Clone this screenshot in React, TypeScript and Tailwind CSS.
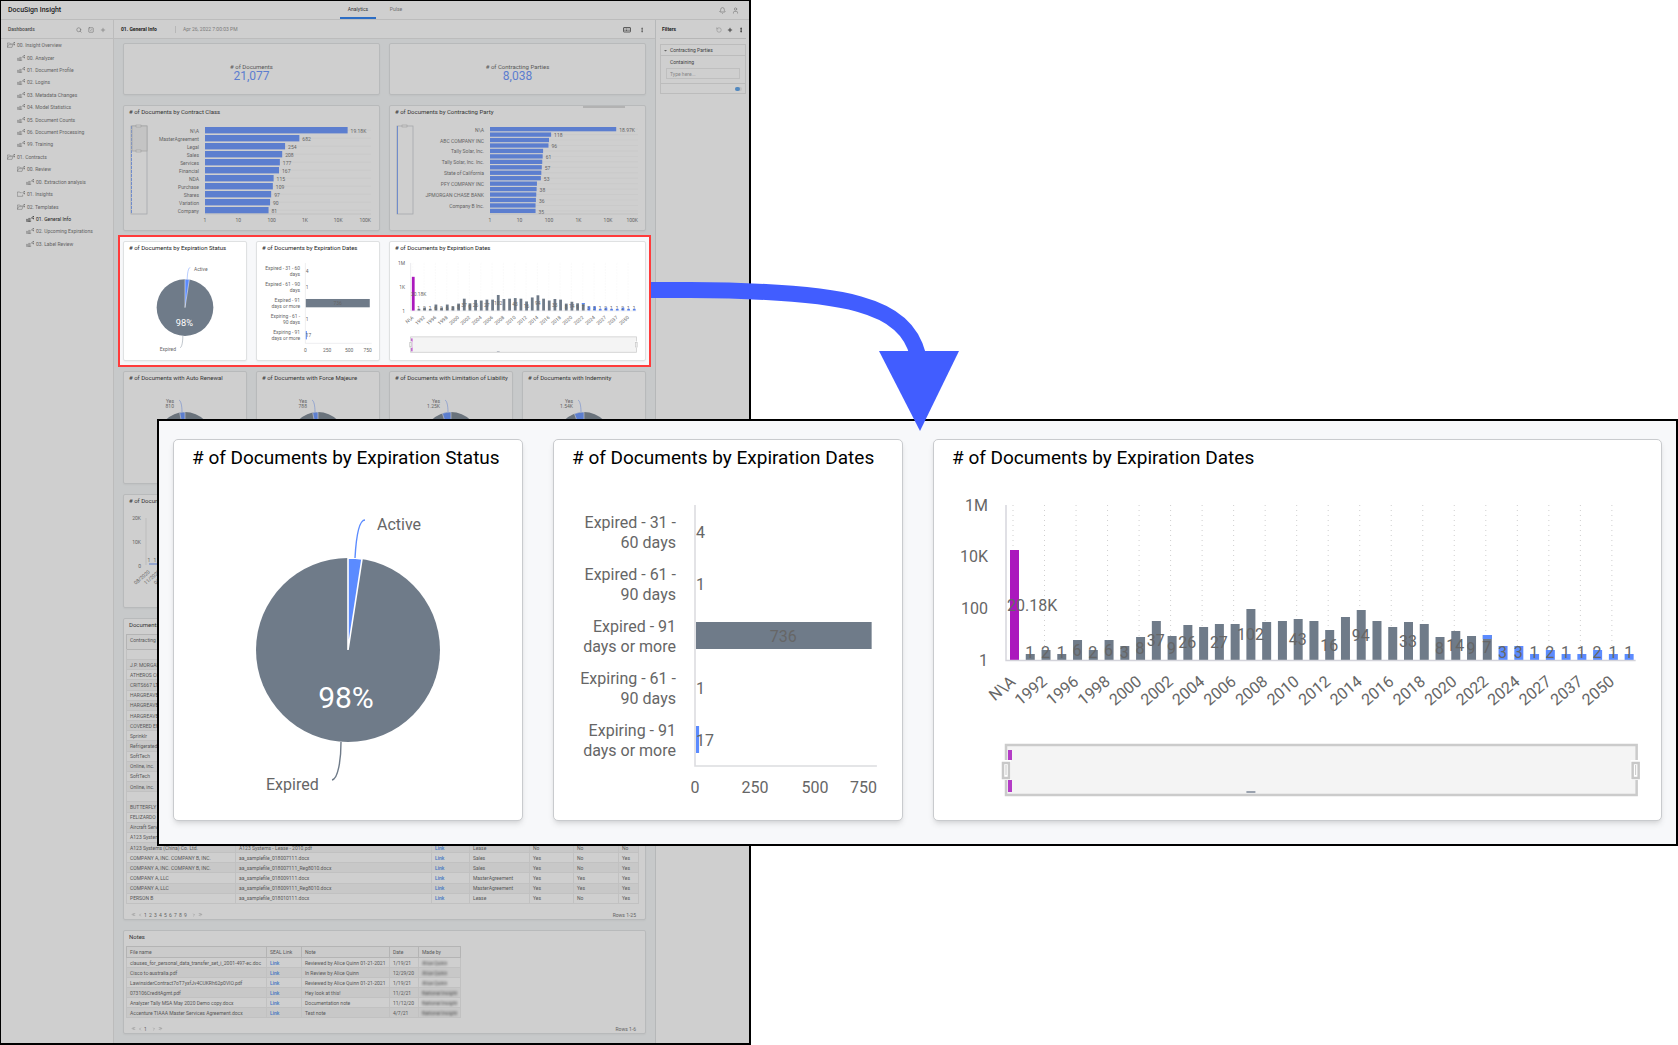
import type { ReactNode } from "react";
import { clsx } from "clsx";
import {
  Bell,
  ChevronLeft,
  ChevronRight,
  ChevronsLeft,
  ChevronsRight,
  EllipsisVertical,
  Plus,
  RotateCcw,
  Search,
  SquareCheck,
  User,
} from "lucide-react";

const SLATE = "#6f7b89";
const BLUE = "#5b8bff";
const PURPLE = "#ab18bd";
const LABEL = "#666666";

type TreeItem = {
  label: string;
  level: 0 | 1 | 2;
  kind: "open" | "closed" | "board";
  active?: boolean;
};

const TREE: TreeItem[] = [
  { label: "00. Insight Overview", level: 0, kind: "open" },
  { label: "00. Analyzer", level: 1, kind: "board" },
  { label: "01. Document Profile", level: 1, kind: "board" },
  { label: "02. Logins", level: 1, kind: "board" },
  { label: "03. Metadata Changes", level: 1, kind: "board" },
  { label: "04. Model Statistics", level: 1, kind: "board" },
  { label: "05. Document Counts", level: 1, kind: "board" },
  { label: "06. Document Processing", level: 1, kind: "board" },
  { label: "99. Training", level: 1, kind: "board" },
  { label: "01. Contracts", level: 0, kind: "open" },
  { label: "00. Review", level: 1, kind: "open" },
  { label: "00. Extraction analysis", level: 2, kind: "board" },
  { label: "01. Insights", level: 1, kind: "closed" },
  { label: "02. Templates", level: 1, kind: "open" },
  { label: "01. General Info", level: 2, kind: "board", active: true },
  { label: "02. Upcoming Expirations", level: 2, kind: "board" },
  { label: "03. Label Review", level: 2, kind: "board" },
];

function TreeIcon({ kind }: { kind: TreeItem["kind"] }) {
  return (
    <svg viewBox="0 0 24 18" className="h-[6px] w-[8px] shrink-0" fill="none" stroke="currentColor" strokeWidth="1.4">
      {kind === "board" ? (
        <path d="M1 16V10h4v6zM8 16V7h3v9zM5 17h9v-4M12 10l5-4" />
      ) : (
        <path d={kind === "open" ? "M1 16V3h6l2 2h5M1 16l4-8h13l-3 8z" : "M14 5H9L7 3H1v13h16v-5"} />
      )}
      <circle cx="22" cy="2" r="1.2" fill="currentColor" />
      <circle cx="22" cy="8" r="1.2" fill="currentColor" />
      <path d="M22 2l-5 3 5 3" />
    </svg>
  );
}

function Sidebar() {
  return (
    <nav className="w-[113px] shrink-0 border-r border-[#e4e4e4] bg-white">
      <div className="flex h-[19px] items-center border-b border-[#e4e4e4] px-[7px] pt-px text-[#444]">
        <h2 className="flex-1 text-[5px] font-medium">Dashboards</h2>
        <div className="flex gap-[6px] text-[#666]">
          <button type="button" aria-label="Search"><Search size={6} /></button>
          <button type="button" aria-label="Select"><SquareCheck size={6} /></button>
          <button type="button" aria-label="Add"><Plus size={6} /></button>
        </div>
      </div>
      <ul className="grid h-[211px] auto-rows-fr text-[5px] text-[#666]">
        {TREE.map((item) => (
          <li key={item.level + item.label} className="flex">
            <a
              href="#"
              className={clsx(
                "flex flex-1 items-center gap-[2px] leading-[6px]",
                item.level === 0 && "pl-[6px]",
                item.level === 1 && "pl-[16px]",
                item.level === 2 && "pl-[25px]",
                item.active && "text-black",
              )}
            >
              <TreeIcon kind={item.kind} />
              {item.label}
            </a>
          </li>
        ))}
      </ul>
    </nav>
  );
}

function Filters() {
  return (
    <aside className="w-[94px] shrink-0 border-l border-[#dcdfe0] bg-white pl-[4px] pr-[3px]">
      <div className="flex h-[19px] items-center border-b border-[#dcdcdc] pt-px pl-[2px]">
        <h2 className="flex-1 text-[5px] font-bold">Filters</h2>
        <div className="flex gap-[5px] pr-[2px]">
          <button type="button" aria-label="Reset filters" className="text-[#999]"><RotateCcw size={6} /></button>
          <button type="button" aria-label="Add filter"><Plus size={6} strokeWidth={3} /></button>
          <button type="button" aria-label="Filter menu"><EllipsisVertical size={6} strokeWidth={3} /></button>
        </div>
      </div>
      <div className="mt-[5px] border border-[#e4e4e4] text-[5px] leading-[7px]">
        <button type="button" className="flex h-[11px] w-full items-center gap-[3px] border-b border-[#e4e4e4] pl-[3px] text-[#333]">
          <svg viewBox="0 0 6 6" className="size-[3px]"><path d="M0 2h6L3 5z" fill="#666" /></svg>
          Contracting Parties
        </button>
        <div className="px-[5px] pb-[4px]">
          <label htmlFor="party" className="block h-[12px] pt-[3px] pl-[4px] text-[#333]">Containing</label>
          <input
            id="party"
            placeholder="Type here..."
            className="block h-[11px] w-full border border-[#e8e8e8] pl-[3px] text-[5px] placeholder:text-[#999]"
          />
        </div>
        <div className="flex h-[10px] items-center justify-end border-t border-[#e4e4e4] pr-[3px]">
          <label className="flex h-[4px] w-[7px] rounded-full bg-[#e8e8e8]">
            <input type="checkbox" defaultChecked aria-label="Enable filter" className="size-0 appearance-none" />
            <span className="h-[4px] w-[5px] rounded-xs bg-[#4d9bea]" />
          </label>
        </div>
      </div>
    </aside>
  );
}

function Card({ title, className, children }: { title?: string; className?: string; children?: ReactNode }) {
  return (
    <section className={clsx("flex flex-col rounded-[2px] border border-[#dfe1e2] bg-white shadow-xs", className)}>
      {title ? (
        <h3 className="h-[12px] shrink-0 overflow-hidden pl-[5px] text-[6px] leading-[11px] whitespace-nowrap text-[#222]">{title}</h3>
      ) : null}
      {children}
    </section>
  );
}

function Kpi({ label, value }: { label: string; value: string }) {
  return (
    <Card className="col-span-2 h-[52px] items-center justify-center pt-[8px]">
      <p className="text-[6px] leading-[7px] text-[#555]">{label}</p>
      <p className="text-[12px] leading-[13px] text-[#5b8bff]">{value}</p>
    </Card>
  );
}

type LogBarsProps = {
  rows: { name?: string; value: number; text?: string }[];
  axisX: number;
  decade: number;
  pitch: number;
  barHeight: number;
  right: number;
  windowEnd?: number;
};

// horizontal bars on a logarithmic scale, with the vertical range slider on the left
function LogBars({ rows, axisX, decade, pitch, barHeight, right, windowEnd }: LogBarsProps) {
  return (
    <svg viewBox="0 0 255 112" className="h-[112px] w-full" fontSize="5" fill={LABEL}>
      <rect x="7" y="8" width="16" height="88" fill="none" stroke="#c4c8cc" strokeWidth="0.8" />
      <path d="M7.5 8v88" stroke={BLUE} strokeWidth="0.8" strokeDasharray={windowEnd ? "3 1" : undefined} />
      {windowEnd ? <rect x="8" y="8" width="15" height={windowEnd} fill="#f0f0f0" stroke="#c4c4c4" strokeWidth="0.8" /> : null}
      <rect x="12" y="7" width="5" height="2" fill="#fff" stroke="#aaa" strokeWidth="0.5" />
      {windowEnd ? <rect x="12" y={7 + windowEnd} width="5" height="2" fill="#fff" stroke="#aaa" strokeWidth="0.5" /> : null}
      {rows.map((row, i) => {
        const y = 9 + barHeight / 2 + i * pitch;
        const width = Math.log10(row.value) * decade;
        return (
          <g key={i}>
            <path d={`M${axisX} ${y}H${right}`} stroke="#f0f0f0" strokeWidth="0.5" />
            <rect x={axisX} y={y - barHeight / 2} width={width} height={barHeight} fill={BLUE} />
            {row.name ? (
              <text x={axisX - 6} y={y + 0.5} textAnchor="end" dominantBaseline="central">{row.name}</text>
            ) : null}
            {row.text ? <text x={axisX + width + 3} y={y + 0.6} dominantBaseline="central">{row.text}</text> : null}
          </g>
        );
      })}
      <path d={`M${axisX} 96H${right}`} stroke="#ddd" strokeWidth="0.6" />
      {["1", "10", "100", "1K", "10K", "100K"].map((tick, i) => (
        <text
          key={tick}
          x={i === 5 ? right : axisX + i * decade}
          y="102"
          textAnchor={i === 5 ? "end" : "middle"}
          dominantBaseline="central"
        >
          {tick}
        </text>
      ))}
    </svg>
  );
}

const CLASS_ROWS = [
  { name: "N\\A", value: 19180, text: "19.18K" },
  { name: "MasterAgreement", value: 682, text: "682" },
  { name: "Legal", value: 254, text: "254" },
  { name: "Sales", value: 208, text: "208" },
  { name: "Services", value: 177, text: "177" },
  { name: "Financial", value: 167, text: "167" },
  { name: "NDA", value: 115, text: "115" },
  { name: "Purchase", value: 109, text: "109" },
  { name: "Shares", value: 97, text: "97" },
  { name: "Variation", value: 90, text: "90" },
  { name: "Company", value: 81, text: "81" },
];

const PARTY_ROWS = [
  { name: "N\\A", value: 18970, text: "18.97K" },
  { value: 118, text: "118" },
  { name: "ABC COMPANY INC", value: 100 },
  { value: 96, text: "96" },
  { name: "Tally Solar, Inc.", value: 63 },
  { value: 61, text: "61" },
  { name: "Tally Solar, Inc. Inc.", value: 59 },
  { value: 57, text: "57" },
  { name: "State of California", value: 55 },
  { value: 53, text: "53" },
  { name: "PFY COMPANY INC", value: 39 },
  { value: 38, text: "38" },
  { name: "JPMORGAN CHASE BANK", value: 37 },
  { value: 36, text: "36" },
  { name: "Company B Inc.", value: 35 },
  { value: 35, text: "35" },
];

function StatusPie({ className }: { className: string }) {
  return (
    <svg viewBox="0 0 348 344" className={clsx("w-full", className)} fontSize="16" fill={LABEL}>
      <circle cx="174" cy="174" r="92" fill={SLATE} />
      <path d="M174 174V82A92 92 0 0 1 188 83Z" fill={BLUE} stroke="#fff" strokeWidth="1.6" />
      <path d="M181 82C182 64 184 44 191 44" fill="none" stroke={BLUE} strokeWidth="1.4" />
      <path d="M167 266C167 284 164 303 158 304" fill="none" stroke={SLATE} strokeWidth="1.4" />
      <text x="203" y="48" dominantBaseline="central">Active</text>
      <text x="92" y="308" dominantBaseline="central">Expired</text>
      <text x="172" y="221" fontSize="30" fill="#fff" textAnchor="middle" dominantBaseline="central">98%</text>
    </svg>
  );
}

type DayBarsProps = {
  className: string;
  width: number;
  labelX: number;
  axisX: number;
  unit: number;
  names: [string, string][];
};

function DayBars({ className, width, labelX, axisX, unit, names }: DayBarsProps) {
  const values = [4, 1, 736, 1, 17];
  const end = axisX + unit * 758;
  return (
    <svg viewBox={`0 0 ${width} 344`} className={clsx("w-full", className)} fontSize="16" fill={LABEL}>
      {values.map((value, i) => {
        const y = 55 + i * 52;
        return (
          <g key={i}>
            {value >= 10 ? (
              <rect x={axisX + 1} y={y - 13} width={Math.max(2, value * unit - 1)} height="27" fill={value > 100 ? SLATE : BLUE} />
            ) : null}
            <text x={labelX} y={y - 9} textAnchor="end" dominantBaseline="central">{names[i][0]}</text>
            <text x={labelX} y={y + 11} textAnchor="end" dominantBaseline="central">{names[i][1]}</text>
            <text
              x={value > 100 ? axisX + (value * unit) / 2 : axisX + 1}
              y={y + 1}
              textAnchor={value > 100 ? "middle" : "start"}
              dominantBaseline="central"
            >
              {value}
            </text>
          </g>
        );
      })}
      <path d={`M${axisX} 29V290H${end}`} fill="none" stroke="#dcdde0" strokeWidth="1.6" />
      {[0, 250, 500, 750].map((tick) => (
        <text
          key={tick}
          x={tick === 750 ? end : axisX + tick * unit}
          y="311"
          textAnchor={tick === 750 ? "end" : "middle"}
          dominantBaseline="central"
        >
          {tick}
        </text>
      ))}
    </svg>
  );
}

const YEAR_HEIGHTS = [
  110, 6, 10, 6, 20, 10, 20, 14, 23, 39, 24, 35, 33, 36, 36, 51, 38, 39, 41, 39,
  30, 43, 50, 39, 33, 38, 36, 23, 29, 24, 25, 14, 14, 6, 10, 6, 6, 10, 6, 6,
];

const YEAR_VALUES: Record<number, string> = {
  1: "1", 2: "2", 3: "1", 4: "6", 5: "2", 6: "6", 7: "3", 8: "8", 9: "37", 10: "9",
  11: "26", 13: "27", 15: "102", 18: "43", 20: "16", 22: "94", 25: "33", 27: "8",
  28: "14", 29: "9", 30: "7", 31: "3", 32: "3", 33: "1", 34: "2", 35: "1", 36: "1",
  37: "2", 38: "1", 39: "1",
};

const YEARS = [
  "N\\A", "1992", "1996", "1998", "2000", "2002", "2004", "2006", "2008", "2010",
  "2012", "2014", "2016", "2018", "2020", "2022", "2024", "2027", "2037", "2050",
];

type YearBarsProps = {
  className: string;
  width: number;
  axisX: number;
  pitch: number;
  ticks: string[];
};

function YearBars({ className, width, axisX, pitch, ticks }: YearBarsProps) {
  const base = 184;
  const center = (i: number) => axisX + 8 + i * pitch;
  const end = center(39) + 7;
  return (
    <svg viewBox={`0 0 ${width} 344`} className={clsx("w-full", className)} fontSize="16" fill={LABEL}>
      {ticks.map((tick, i) => (
        <text key={tick} x={axisX - 18} y={29 + (i * 155) / (ticks.length - 1)} textAnchor="end" dominantBaseline="central">
          {tick}
        </text>
      ))}
      {YEARS.map((year, i) => (
        <path key={year} d={`M${center(i * 2) - 1} 29V${base}`} stroke="#cfcfcf" strokeDasharray="1 4" />
      ))}
      {YEAR_HEIGHTS.map((height, i) => (
        <rect
          key={i}
          x={center(i) - 4}
          y={base - height}
          width="9"
          height={height}
          fill={i === 0 ? PURPLE : i > 30 ? BLUE : SLATE}
        />
      ))}
      <rect x={center(30) - 4} y={base - 25} width="9" height="4" fill={BLUE} />
      <path d={`M${axisX} 29V${base + 0.5}H${end}`} fill="none" stroke="#d3d3da" strokeWidth="1.4" />
      <text x={axisX + 1} y="129" dominantBaseline="central">20.18K</text>
      {Object.entries(YEAR_VALUES).map(([key, value]) => {
        const i = Number(key);
        return (
          <text key={key} x={center(i)} y={base - Math.max(8, YEAR_HEIGHTS[i] / 2)} textAnchor="middle" dominantBaseline="central">
            {value}
          </text>
        );
      })}
      {YEARS.map((year, i) => (
        <text
          key={year}
          textAnchor="end"
          dominantBaseline="central"
          transform={`translate(${center(i * 2) - 1} 203) rotate(-40)`}
        >
          {year}
        </text>
      ))}
      <rect x={axisX} y="269" width={end - axisX + 1} height="50" fill="#f4f4f4" stroke="#cbcbcb" strokeWidth="2.5" />
      <rect x={axisX + 2} y="274" width="4" height="42" fill="#b43cc6" />
      <rect x={axisX + 2} y="284" width="4" height="20" fill="#f4f4f4" />
      <rect x={center(15) - 4} y="315" width="9" height="2" fill="#9aa2ae" />
      {[axisX, end].map((x) => (
        <g key={x}>
          <rect x={x - 5} y="284" width="10" height="20" fill="#fff" />
          <rect x={x - 3} y="287" width="6" height="15" fill="#fff" stroke="#c8c8c8" strokeWidth="2.5" />
          <path d={`M${x} 289v10`} stroke="#c8c8c8" />
        </g>
      ))}
    </svg>
  );
}

function YesPie({ value, sweep }: { value: string; sweep: number }) {
  const angle = (sweep * Math.PI) / 180;
  const x = 61 - 28 * Math.sin(angle);
  const y = 56 - 28 * Math.cos(angle);
  return (
    <svg viewBox="0 0 122 99" className="h-[99px] w-full" fontSize="5" fill={LABEL}>
      <circle cx="61" cy="56" r="28" fill={SLATE} />
      <path d={`M61 56L${x} ${y}A28 28 0 0 1 61 28Z`} fill={BLUE} stroke="#fff" strokeWidth="0.6" />
      <path d="M55 16C57 17 58 22 58 28" fill="none" stroke={BLUE} strokeWidth="0.5" />
      <text x="50" y="17" textAnchor="end" dominantBaseline="central">Yes</text>
      <text x="50" y="22" textAnchor="end" dominantBaseline="central">{value}</text>
    </svg>
  );
}

const YES_CHARTS = [
  { title: "# of Documents with Auto Renewal", value: "810", sweep: 11 },
  { title: "# of Documents with Force Majeure", value: "788", sweep: 11 },
  { title: "# of Documents with Limitation of Liability", value: "1.25K", sweep: 18 },
  { title: "# of Documents with Indemnity", value: "1.54K", sweep: 20 },
];

function MonthLine() {
  return (
    <svg viewBox="0 0 521 100" preserveAspectRatio="xMinYMin meet" className="h-[100px] w-full" fontSize="5" fill={LABEL}>
      {["20K", "10K", "0"].map((tick, i) => (
        <text key={tick} x="17" y={11 + i * 24} textAnchor="end" dominantBaseline="central">{tick}</text>
      ))}
      <path d="M22 11V58" stroke="#ccc" strokeWidth="0.5" />
      <path d="M25 57H500" stroke={BLUE} />
      {["08/2020", "11/2020", "01/2021"].map((tick, i) => (
        <g key={tick}>
          <text x={25 + i * 6} y="53" textAnchor="middle" dominantBaseline="central">1</text>
          <text transform={`translate(${25 + i * 10} 64) rotate(-40)`} textAnchor="end" dominantBaseline="central">{tick}</text>
        </g>
      ))}
    </svg>
  );
}

const DOCUMENTS: string[][] = [
  [""],
  ["J.P. MORGAN"],
  ["ATHEROS CO."],
  ["CRITS667 LTD"],
  ["HARGREAVES"],
  ["HARGREAVES"],
  ["HARGREAVES"],
  ["COVERED EN"],
  ["Sprinklr"],
  ["Refrigerated"],
  ["SoftTech"],
  ["Online, inc."],
  ["SoftTech"],
  ["Online, inc."],
  [""],
  ["BUTTERFLY"],
  ["FELIZARDO"],
  ["Aircraft Serv"],
  ["A123 System"],
  ["A123 Systems (China) Co. Ltd.", "A123 Systems - Lease - 2010.pdf", "Link", "Lease", "No", "No", "No"],
  ["COMPANY A, INC. COMPANY B, INC.", "aa_samplefile_018007111.docx", "Link", "Sales", "Yes", "No", "Yes"],
  ["COMPANY A, INC. COMPANY B, INC.", "aa_samplefile_018007111_Reg8010.docx", "Link", "Sales", "Yes", "No", "Yes"],
  ["COMPANY A, LLC", "aa_samplefile_018009111.docx", "Link", "MasterAgreement", "Yes", "Yes", "Yes"],
  ["COMPANY A, LLC", "aa_samplefile_018009111_Reg8010.docx", "Link", "MasterAgreement", "Yes", "Yes", "Yes"],
  ["PERSON B", "aa_samplefile_018010111.docx", "Link", "Lease", "Yes", "No", "Yes"],
];

const NOTES: string[][] = [
  ["clauses_for_personal_data_transfer_set_i_2001-497-ec.doc", "Link", "Reviewed by Alice Quinn 01-21-2021", "1/19/21", "Alice Quinn"],
  ["Cisco tc-australia.pdf", "Link", "In Review by Alice Quinn", "12/29/20", "Alice Quinn"],
  ["LawinsiderContract7oT7yxfJv4CUKRh62p0VIO.pdf", "Link", "Reviewed by Alice Quinn 01-21-2021", "1/19/21", "Alice Quinn"],
  ["073106CreditAgmt.pdf", "Link", "Hey look at this!", "11/2/21", "National Insight"],
  ["Analyzer Tally MSA May 2020 Demo copy.docx", "Link", "Documentation note", "11/12/20", "National Insight"],
  ["Accenture TIAAA Master Services Agreement.docx", "Link", "Test note", "4/7/21", "National Insight"],
];

function Cell({ text, hidden }: { text: string; hidden?: boolean }) {
  return (
    <td className="overflow-hidden border-x border-[#ebebeb] px-[3px] py-0 whitespace-nowrap">
      {text === "Link" ? (
        <a href="#" className="block leading-[6px] font-medium text-[#2f80ed]">Link</a>
      ) : (
        <span className={clsx("block h-[6px] leading-[6px]", hidden && "w-fit bg-black/5 blur-[1px]")}>{text}</span>
      )}
    </td>
  );
}

function Pager({ pages, rows }: { pages: number; rows: string }) {
  return (
    <div className="flex flex-1 items-center pt-[6px] pr-[9px] pl-[7px] text-[5px] leading-[6px] text-[#666]">
      <div className="flex flex-1 items-center gap-[2px]">
        <button type="button" aria-label="First page"><ChevronsLeft size={5} /></button>
        <button type="button" aria-label="Previous page"><ChevronLeft size={4} /></button>
        {Array.from({ length: pages }, (_, i) => (
          <button key={i} type="button" className="w-[3px]">{i + 1}</button>
        ))}
        <button type="button" aria-label="Next page" className="ml-[3px]"><ChevronRight size={4} /></button>
        <button type="button" aria-label="Last page"><ChevronsRight size={5} /></button>
      </div>
      <span>{rows}</span>
    </div>
  );
}

function DocumentsTable() {
  return (
    <Card title="Documents" className="col-span-4 h-[302px]">
      <div className="mt-[3px] mr-[7px] ml-[2px]">
        <table className="h-[270px] w-full table-fixed border-collapse border border-[#d8d8d8] text-left text-[5px] leading-[6px] text-[#555]">
          <colgroup>
            <col className="w-[109px]" />
            <col className="w-[196px]" />
            <col className="w-[38px]" />
            <col className="w-[60px]" />
            <col className="w-[44px]" />
            <col className="w-[45px]" />
            <col className="w-[20px]" />
          </colgroup>
          <thead>
            <tr className="h-[15px] border border-[#d8d8d8] bg-[#fafafa] align-top">
              <th scope="col" className="px-[3px] pt-[2px] font-normal whitespace-nowrap">Contracting Party</th>
              <th scope="col" colSpan={6} />
            </tr>
          </thead>
          <tbody>
            {DOCUMENTS.map((row, i) => (
              <tr key={i} className="h-[10px] border-b border-[#ebebeb] even:bg-[#f5f5f5]">
                {Array.from({ length: 7 }, (_, c) => <Cell key={c} text={row[c] ?? ""} />)}
              </tr>
            ))}
          </tbody>
        </table>
      </div>
      <Pager pages={9} rows="Rows 1-25" />
    </Card>
  );
}

function NotesTable() {
  return (
    <Card title="Notes" className="col-span-4 h-[104px]">
      <table className="mt-[3px] ml-[2px] h-[72px] w-[334px] table-fixed border-collapse border border-[#d8d8d8] text-left text-[5px] leading-[6px] text-[#555]">
        <colgroup>
          <col className="w-[140px]" />
          <col className="w-[35px]" />
          <col className="w-[88px]" />
          <col className="w-[29px]" />
          <col className="w-[42px]" />
        </colgroup>
        <thead>
          <tr className="h-[11px] border-b border-[#d8d8d8] bg-[#fafafa]">
            {["File name", "SEAL Link", "Note", "Date", "Made by"].map((name) => (
              <th key={name} scope="col" className="border border-[#d8d8d8] px-[3px] py-0 font-normal whitespace-nowrap">{name}</th>
            ))}
          </tr>
        </thead>
        <tbody>
          {NOTES.map((row) => (
            <tr key={row[0]} className="h-[10px] border-b border-[#ebebeb] even:bg-[#f5f5f5]">
              {row.map((text, c) => <Cell key={c} text={text} hidden={c === 4} />)}
            </tr>
          ))}
        </tbody>
      </table>
      <Pager pages={1} rows="Rows 1-6" />
    </Card>
  );
}

function Dashboard() {
  return (
    <div className="relative flex flex-col border border-r-2 border-b-2 border-black bg-white">
      <header className="flex h-[19px] items-center border-b border-[#e4e4e4] pl-[7px]">
        <h1 className="w-[332px] text-[7px] leading-[10px] font-medium">DocuSign Insight</h1>
        <div className="flex h-full flex-1 text-[5px] text-[#777]">
          <button type="button" className="h-full w-[36px] border-b-2 border-[#1673f0] pt-px text-[#222]">Analytics</button>
          <button type="button" className="w-[40px]">Pulse</button>
        </div>
        <div className="flex gap-[6px] pr-[10px] text-[#777]">
          <button type="button" aria-label="Notifications"><Bell size={7} /></button>
          <button type="button" aria-label="Account"><User size={7} /></button>
        </div>
      </header>

      <div className="flex flex-1">
        <Sidebar />
        <main className="min-w-0 flex-1 bg-[#f4f7f8]">
          <div className="flex h-[19px] items-center border-b border-[#e4e4e4] bg-white pt-px pr-[10px] pl-[7px] text-[5px]">
            <h2 className="w-[55px] border-r border-[#ddd] font-bold">01. General Info</h2>
            <p className="flex-1 pl-[7px] text-[#888]">Apr 26, 2022 7:00:03 PM</p>
            <button type="button" aria-label="Shortcuts" className="mr-[8px]">
              <svg viewBox="0 0 16 12" className="h-[6px] w-[8px]" fill="none" stroke="#333" strokeWidth="1.6">
                <rect x="1" y="1" width="14" height="9" rx="1" />
                <path d="M3 4h10M3 7h10" strokeDasharray="2 1" />
              </svg>
            </button>
            <button type="button" aria-label="Dashboard menu"><EllipsisVertical size={6} /></button>
          </div>
          <div className="grid grid-cols-4 gap-x-[9px] gap-y-[10px] px-[9px] pt-[4px] pb-[9px]">
            <Kpi label="# of Documents" value="21,077" />
            <Kpi label="# of Contracting Parties" value="8,038" />

            <Card title="# of Documents by Contract Class" className="col-span-2 h-[126px]">
              <LogBars rows={CLASS_ROWS} axisX={81} decade={33.3} pitch={8} barHeight={6.4} right={247} windowEnd={25} />
            </Card>
            <Card title="# of Documents by Contracting Party" className="relative col-span-2 h-[126px]">
              <span className="absolute top-0 right-[20px] h-[2px] w-[42px] bg-[#d6d6d6]" />
              <LogBars rows={PARTY_ROWS} axisX={100} decade={29.5} pitch={5.45} barHeight={4.3} right={248} />
            </Card>

            <div className="relative z-20 col-span-4 -mx-[5px] -my-[6px] grid grid-cols-4 gap-x-[9px] border-2 border-[#ff3b3b] bg-[#f7f8fa] px-[3px] py-[4px]">
              <Card title="# of Documents by Expiration Status">
                <StatusPie className="h-[106px]" />
              </Card>
              <Card title="# of Documents by Expiration Dates">
                <DayBars
                  className="h-[106px]"
                  width={396}
                  labelX={140}
                  axisX={157}
                  unit={0.284}
                  names={[
                    ["Expired - 31 - 60", "days"],
                    ["Expired - 61 - 90", "days"],
                    ["Expired - 91", "days or more"],
                    ["Expiring - 61 -", "90 days"],
                    ["Expiring - 91", "days or more"],
                  ]}
                />
              </Card>
              <Card title="# of Documents by Expiration Dates" className="col-span-2">
                <YearBars className="h-[106px]" width={828} axisX={67} pitch={18.4} ticks={["1M", "1K", "1"]} />
              </Card>
            </div>

            {YES_CHARTS.map((chart) => (
              <Card key={chart.title} title={chart.title} className="h-[113px]">
                <YesPie value={chart.value} sweep={chart.sweep} />
              </Card>
            ))}

            <Card title="# of Documents by Creation Month" className="col-span-4 h-[114px]">
              <MonthLine />
            </Card>
            <DocumentsTable />
            <NotesTable />
          </div>
        </main>
        <Filters />
      </div>

      <div className="pointer-events-none absolute inset-0 z-10 bg-[#616161]/30" />
    </div>
  );
}

function ZoomCard({ title, children }: { title: string; children: ReactNode }) {
  return (
    <section className="rounded-[5px] border border-[#c9cbce] bg-white shadow-md">
      <h3 className="h-[36px] pl-[18px] text-[19px] leading-[36px] whitespace-nowrap text-black">{title}</h3>
      {children}
    </section>
  );
}

function ZoomPanel() {
  return (
    <div className="absolute top-[419px] right-0 left-[157px] z-30 grid grid-cols-[350fr_350fr_729fr] gap-x-[30px] border-2 border-black bg-[#f7f8fa] px-[14px] pt-[18px] pb-[23px]">
      <ZoomCard title="# of Documents by Expiration Status">
        <StatusPie className="h-[344px]" />
      </ZoomCard>
      <ZoomCard title="# of Documents by Expiration Dates">
        <DayBars
          className="h-[344px]"
          width={348}
          labelX={122}
          axisX={141}
          unit={0.24}
          names={[
            ["Expired - 31 -", "60 days"],
            ["Expired - 61 -", "90 days"],
            ["Expired - 91", "days or more"],
            ["Expiring - 61 -", "90 days"],
            ["Expiring - 91", "days or more"],
          ]}
        />
      </ZoomCard>
      <ZoomCard title="# of Documents by Expiration Dates">
        <YearBars className="h-[344px]" width={727} axisX={72} pitch={15.76} ticks={["1M", "10K", "100", "1"]} />
      </ZoomCard>
    </div>
  );
}

export default function App() {
  return (
    <div className="relative grid grid-cols-[751fr_927fr] bg-white font-['Roboto',sans-serif]">
      <Dashboard />
      <ZoomPanel />
      <svg viewBox="0 0 320 160" className="pointer-events-none absolute top-[275px] left-[645px] z-40 h-[160px] w-[320px]">
        <path d="M6 15H45C205 16 260 30 273 80" fill="none" stroke="#415dff" strokeWidth="16" />
        <path d="M234 76H314L275 156Z" fill="#415dff" />
      </svg>
    </div>
  );
}
